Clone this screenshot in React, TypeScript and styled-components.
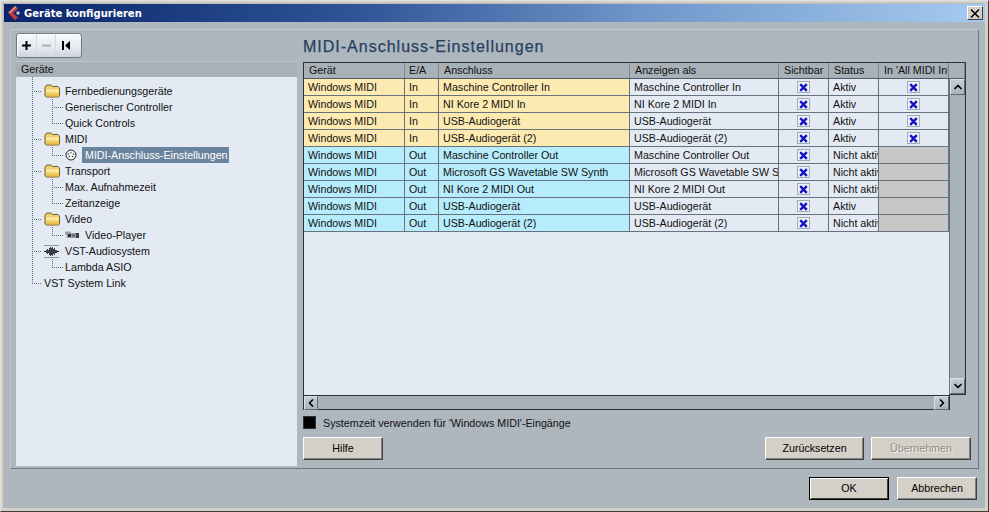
import styled, { createGlobalStyle } from "styled-components";
import { ChevronDown, ChevronLeft, ChevronRight, ChevronUp } from "lucide-react";

const GlobalStyle = createGlobalStyle`
  html, body {
    margin: 0;
    padding: 0;
    background: #aeb6be;
  }
  body {
    font-family: "Liberation Sans", Arial, sans-serif;
    font-size: 10.7px;
    color: #111;
  }
`;

const Win = styled.div`
  box-sizing: border-box;
  width: 989px;
  height: 512px;
  padding: 3px;
  display: flex;
  flex-direction: column;
  background: #aeb6be;
  border-style: solid;
  border-width: 1px;
  border-color: #e4e2dc #3c3c3c #3c3c3c #e4e2dc;
  box-shadow: inset 1px 1px 0 #d4d0c8, inset -1px -1px 0 #d4d0c8, inset 2px 2px 0 #d4d0c8, inset -3px -3px 0 #d4d0c8;
`;

const TitleBar = styled.div`
  flex: none;
  height: 18px;
  display: flex;
  align-items: center;
  padding: 0 2px 0 3px;
  background: linear-gradient(90deg, #0a246a 0%, #2e5396 35%, #6f97c9 65%, #a6caf0 100%);
`;

const TitleText = styled.span`
  margin-left: 3px;
  flex: 1;
  font-family: "DejaVu Sans", sans-serif;
  font-weight: 700;
  font-size: 10px;
  color: #fff;
`;

const CloseButton = styled.button`
  box-sizing: border-box;
  width: 16px;
  height: 14px;
  padding: 0;
  display: flex;
  align-items: center;
  justify-content: center;
  background: #d4d0c8;
  border: 1px solid;
  border-color: #fff #404040 #404040 #fff;
`;

const Panel = styled.div`
  flex: none;
  box-sizing: border-box;
  height: 440px;
  margin: 7px 6px 0 6px;
  padding: 3px 7px 2px 5px;
  display: flex;
  gap: 6px;
  border: 1px solid;
  border-color: #c3cad1 #6d7982 #6d7982 #c3cad1;
`;

const Sidebar = styled.div`
  flex: none;
  width: 281px;
  display: flex;
  flex-direction: column;
`;

const ToolBox = styled.div`
  box-sizing: border-box;
  width: 66px;
  height: 25px;
  display: flex;
  border: 1px solid #6f7a84;
  border-radius: 3px;
  background: linear-gradient(180deg, #f6f8fa 0%, #e6ebf0 55%, #cdd5dc 100%);
  box-shadow: inset 1px 1px 0 #fff;
`;

const ToolButton = styled.div<{ $last?: boolean }>`
  box-sizing: border-box;
  flex: 1;
  display: flex;
  align-items: center;
  justify-content: center;
  padding-right: ${({ $last }) => ($last ? "6px" : "0")};
  border-right: ${({ $last }) => ($last ? "none" : "1px solid #d2d9df")};
`;

const PaneHeader = styled.div`
  flex: none;
  margin-top: 3px;
  height: 16px;
  line-height: 15px;
  padding-left: 5px;
  background: #a8b0b8;
  border-top: 1px solid #bcc3ca;
  box-sizing: border-box;
`;

const TreeBody = styled.div`
  flex: 1;
  background: #e3eaf3;
  padding-left: 16px;
`;

const TreeLead = styled.div`
  height: 6px;
  display: flex;
`;

const TreeRow = styled.div`
  height: 16px;
  display: flex;
  align-items: center;
  white-space: nowrap;
`;

const dot = "#5f6b75";
const dotV = `repeating-linear-gradient(180deg, ${dot} 0 1px, transparent 1px 2px)`;
const dotH = `repeating-linear-gradient(90deg, ${dot} 0 1px, transparent 1px 2px)`;

const guideLayers = {
  pipe: { image: dotV, size: "1px 100%", position: "0 0" },
  branch: { image: `${dotV}, ${dotH}`, size: "1px 100%, 100% 1px", position: "0 0, 0 8px" },
  end: { image: `${dotV}, ${dotH}`, size: "1px 9px, 100% 1px", position: "0 0, 0 8px" },
};

const Guide = styled.span<{ $kind: keyof typeof guideLayers; $w: number }>`
  flex: none;
  align-self: stretch;
  box-sizing: border-box;
  width: ${({ $w }) => $w}px;
  padding-right: 2px;
  background-repeat: no-repeat;
  background-origin: content-box;
  background-image: ${({ $kind }) => guideLayers[$kind].image};
  background-size: ${({ $kind }) => guideLayers[$kind].size};
  background-position: ${({ $kind }) => guideLayers[$kind].position};
`;

const IconSlot = styled.span<{ $w: number }>`
  flex: none;
  width: ${({ $w }) => $w}px;
  display: flex;
  align-items: center;
`;

const NodeLabel = styled.span<{ $selected?: boolean }>`
  display: block;
  height: 16px;
  line-height: 16px;
  padding: ${({ $selected }) => ($selected ? "0 1px 0 3px" : "0")};
  background: ${({ $selected }) => ($selected ? "#6b849e" : "transparent")};
  color: ${({ $selected }) => ($selected ? "#fff" : "#111")};
`;

const Main = styled.div`
  flex: 1;
  display: flex;
  flex-direction: column;
  min-width: 0;
`;

const Heading = styled.h1`
  flex: none;
  box-sizing: border-box;
  height: 29px;
  margin: 0;
  padding-top: 4px;
  font-size: 16px;
  line-height: 19px;
  font-weight: 400;
  letter-spacing: 1px;
  color: #26415e;
  -webkit-text-stroke: 0.25px #26415e;
`;

const TableFrame = styled.div`
  flex: none;
  box-sizing: border-box;
  width: 663px;
  height: 348px;
  border-top: 1px solid #26323c;
  border-left: 1px solid #26323c;
  display: flex;
  flex-direction: column;
`;

const columns = "101px 34px 191px 149px 50px 50px 70px";

const HeaderRow = styled.div`
  flex: none;
  box-sizing: border-box;
  height: 16px;
  display: grid;
  grid-template-columns: ${columns} 1fr;
  background: #a8b0b8;
  border-right: 1px solid #26323c;
  border-bottom: 1px solid #4e5b66;
`;

const HeaderCell = styled.div<{ $pad: number }>`
  box-sizing: border-box;
  padding-left: ${({ $pad }) => $pad}px;
  line-height: 15px;
  white-space: nowrap;
  overflow: hidden;
  border-right: 1px solid #7d8891;
`;

const TableMiddle = styled.div`
  flex: 1;
  display: flex;
  min-height: 0;
`;

const RowsArea = styled.div`
  box-sizing: border-box;
  width: 645px;
  background: #e3eaf3;
`;

const DataRow = styled.div`
  height: 17px;
  display: grid;
  grid-template-columns: ${columns};
`;

const rowTints = { in: "#fdeab0", out: "#b6ecfb", plain: "transparent", off: "#c7c7c7" };

const Cell = styled.div<{ $tint: keyof typeof rowTints; $center?: boolean }>`
  box-sizing: border-box;
  padding-left: ${({ $center }) => ($center ? 0 : "4px")};
  line-height: 16px;
  white-space: nowrap;
  overflow: hidden;
  background: ${({ $tint }) => rowTints[$tint]};
  border-right: 1px solid #66737e;
  border-bottom: 1px solid #66737e;
  display: ${({ $center }) => ($center ? "flex" : "block")};
  justify-content: center;
  align-items: center;
`;

const CheckBox = styled.span`
  box-sizing: border-box;
  width: 13px;
  height: 12px;
  display: flex;
  align-items: center;
  justify-content: center;
  background: #eef2f7;
  border: 1px solid #a3acb5;
`;

const VScroll = styled.div`
  flex: none;
  box-sizing: border-box;
  width: 17px;
  display: flex;
  flex-direction: column;
  justify-content: space-between;
  background: #a8b0b8;
  border-right: 1px solid #26323c;
  border-bottom: 1px solid #26323c;
  border-left: 1px solid #66737e;
`;

const HScroll = styled.div`
  flex: none;
  box-sizing: border-box;
  width: 646px;
  height: 15px;
  display: flex;
  justify-content: space-between;
  background: #a8b0b8;
  border-right: 1px solid #26323c;
  border-bottom: 1px solid #26323c;
  border-top: 1px solid #26323c;
`;

const ScrollButton = styled.div<{ $w: number; $h: number }>`
  flex: none;
  box-sizing: border-box;
  width: ${({ $w }) => $w}px;
  height: ${({ $h }) => $h}px;
  display: flex;
  align-items: center;
  justify-content: center;
  background: linear-gradient(180deg, #c5ccd3, #aab3bb);
  border: 1px solid;
  border-color: #dbe1e6 #5e6a74 #5e6a74 #dbe1e6;
`;

const OptionRow = styled.div`
  flex: none;
  height: 13px;
  margin-top: 6px;
  display: flex;
  align-items: center;
  gap: 7px;
`;

const BlackBox = styled.span`
  box-sizing: border-box;
  width: 13px;
  height: 13px;
  background: #000;
  border: 1px solid #26323c;
`;

const ActionRow = styled.div`
  flex: none;
  margin-top: 8px;
  display: flex;
  gap: 7px;
`;

const Spacer = styled.div`
  flex: 1;
`;

const Button = styled.button<{ $w: number; $isDefault?: boolean }>`
  box-sizing: border-box;
  width: ${({ $w }) => $w}px;
  height: 23px;
  padding: 0 0 2px;
  font-family: "Liberation Sans", Arial, sans-serif;
  font-size: 10.7px;
  color: #000;
  background: #d4d0c8;
  border: 1px solid;
  border-color: ${({ $isDefault }) =>
    $isDefault ? "#000" : "#fff #404040 #404040 #fff"};
  box-shadow: ${({ $isDefault }) =>
    $isDefault
      ? "inset 1px 1px 0 #fff, inset -1px -1px 0 #404040"
      : "inset -1px -1px 0 #808080"};
  &:disabled {
    color: #8f8c85;
    text-shadow: 1px 1px 0 #f2f0ea;
  }
`;

const Footer = styled.div`
  flex: none;
  margin-top: 8px;
  padding-right: 8px;
  display: flex;
  justify-content: flex-end;
  gap: 8px;
`;

const Folder = () => (
  <svg width="17" height="14" viewBox="0 0 17 14">
    <defs>
      <linearGradient id="fold" x1="0" y1="0" x2="0" y2="1">
        <stop offset="0" stopColor="#fff2b0" />
        <stop offset="1" stopColor="#e8b834" />
      </linearGradient>
    </defs>
    <path d="M1 3.5 L2.5 1 H7 L8.5 2.5 H14 L15.5 4 V12 L14.5 13 H2.5 L1 12 Z" fill="#f0d070" stroke="#6f5f30" />
    <path d="M2 5.5 H15 V12 L14 12.5 H3 L2 12 Z" fill="url(#fold)" />
  </svg>
);

const MidiIcon = () => (
  <svg width="12" height="12" viewBox="0 0 12 12">
    <circle cx="6" cy="6" r="5" fill="#f5f5f5" stroke="#222" />
    <circle cx="3.4" cy="5" r="0.7" fill="#222" />
    <circle cx="8.6" cy="5" r="0.7" fill="#222" />
    <circle cx="6" cy="3.6" r="0.7" fill="#222" />
    <circle cx="4.4" cy="7.4" r="0.7" fill="#222" />
    <circle cx="7.6" cy="7.4" r="0.7" fill="#222" />
  </svg>
);

const VideoIcon = () => (
  <svg width="15" height="8" viewBox="0 0 15 8">
    <path d="M0 0.5 H5 L6 2 H11 V7 H2 L1 3.5 H0 Z" fill="#9a9fa5" />
    <rect x="3" y="3" width="3" height="3" fill="#2c2f33" />
    <rect x="7" y="3" width="3" height="3" fill="#6c7075" />
    <rect x="11" y="2" width="3" height="5" fill="#3a3d41" />
  </svg>
);

const AudioIcon = () => (
  <svg width="15" height="15" viewBox="0 0 15 15">
    <path d="M0 1.5 H15 M0 13.5 H15" stroke="#8d949b" />
    <path d="M0 7.5 H15" stroke="#222" />
    <path d="M2.5 6 V9 M3.5 5 V10 M4.5 6 V9 M5.5 4 V11 M6.5 3 V12 M7.5 4 V11 M8.5 3 V12 M9.5 5 V10 M10.5 4 V11 M11.5 6 V9 M12.5 6 V9" stroke="#3a3f44" />
  </svg>
);

const CubaseLogo = () => (
  <svg width="14" height="16" viewBox="0 0 14 16">
    <path d="M8 1 L1 8 L8 15 L11 12.5 L6 8 L11 3.5 Z" fill="#c23a3c" />
    <path d="M8 1 L1 8 L3.5 8 L9.5 2.3 Z" fill="#e58a7c" />
    <circle cx="11" cy="8" r="1.7" fill="#c8ccd8" />
  </svg>
);

const CheckMark = () => (
  <svg width="9" height="9" viewBox="0 0 9 9">
    <path d="M1.2 1.2 L7.8 7.8 M7.8 1.2 L1.2 7.8" stroke="#1212c8" strokeWidth="2.4" />
  </svg>
);

const CloseMark = () => (
  <svg width="10" height="9" viewBox="0 0 10 9">
    <path d="M1 0.5 L9 8.5 M9 0.5 L1 8.5" stroke="#000" strokeWidth="1.5" />
  </svg>
);

const PlusIcon = () => (
  <svg width="9" height="9" viewBox="0 0 9 9">
    <path d="M0 4.5 H9 M4.5 0 V9" stroke="#000" strokeWidth="2" />
  </svg>
);

const MinusIcon = () => (
  <svg width="9" height="9" viewBox="0 0 9 9">
    <path d="M0 4.5 H9" stroke="#a9b2ba" strokeWidth="2" />
  </svg>
);

const RewindIcon = () => (
  <svg width="8" height="9" viewBox="0 0 8 9">
    <rect x="0" y="0" width="2" height="9" fill="#000" />
    <path d="M8 0 V9 L3 4.5 Z" fill="#000" />
  </svg>
);

type TreeNode = {
  label: string;
  icon?: "folder" | "midi" | "video" | "audio";
  children?: TreeNode[];
  selected?: boolean;
};

const tree: TreeNode[] = [
  {
    label: "Fernbedienungsgeräte",
    icon: "folder",
    children: [{ label: "Generischer Controller" }, { label: "Quick Controls" }],
  },
  {
    label: "MIDI",
    icon: "folder",
    children: [{ label: "MIDI-Anschluss-Einstellungen", icon: "midi", selected: true }],
  },
  {
    label: "Transport",
    icon: "folder",
    children: [{ label: "Max. Aufnahmezeit" }, { label: "Zeitanzeige" }],
  },
  {
    label: "Video",
    icon: "folder",
    children: [{ label: "Video-Player", icon: "video" }],
  },
  {
    label: "VST-Audiosystem",
    icon: "audio",
    children: [{ label: "Lambda ASIO" }],
  },
  { label: "VST System Link" },
];

const ports = [
  { dir: "In", port: "Maschine Controller In", status: "Aktiv" },
  { dir: "In", port: "NI Kore 2 MIDI In", status: "Aktiv" },
  { dir: "In", port: "USB-Audiogerät", status: "Aktiv" },
  { dir: "In", port: "USB-Audiogerät (2)", status: "Aktiv" },
  { dir: "Out", port: "Maschine Controller Out", status: "Nicht aktiv" },
  { dir: "Out", port: "Microsoft GS Wavetable SW Synth", status: "Nicht aktiv" },
  { dir: "Out", port: "NI Kore 2 MIDI Out", status: "Nicht aktiv" },
  { dir: "Out", port: "USB-Audiogerät", status: "Aktiv" },
  { dir: "Out", port: "USB-Audiogerät (2)", status: "Nicht aktiv" },
];

const headers = [
  { label: "Gerät", pad: 5 },
  { label: "E/A", pad: 4 },
  { label: "Anschluss", pad: 5 },
  { label: "Anzeigen als", pad: 5 },
  { label: "Sichtbar", pad: 5 },
  { label: "Status", pad: 5 },
  { label: "In 'All MIDI In'", pad: 5 },
  { label: "", pad: 0 },
];

const App = () => {
  return (
    <>
      <GlobalStyle />
      <Win>
        <TitleBar>
          <CubaseLogo />
          <TitleText>Geräte konfigurieren</TitleText>
          <CloseButton>
            <CloseMark />
          </CloseButton>
        </TitleBar>

        <Panel>
          <Sidebar>
            <ToolBox>
              <ToolButton>
                <PlusIcon />
              </ToolButton>
              <ToolButton>
                <MinusIcon />
              </ToolButton>
              <ToolButton $last>
                <RewindIcon />
              </ToolButton>
            </ToolBox>
            <PaneHeader>Geräte</PaneHeader>
            <TreeBody>
              <TreeLead>
                <Guide $kind="pipe" $w={12} />
              </TreeLead>
              {tree.map((node, i) => {
                const last = i === tree.length - 1;
                return (
                  <div key={node.label}>
                    <TreeRow>
                      <Guide $kind={last ? "end" : "branch"} $w={12} />
                      {node.icon === "folder" && (
                        <IconSlot $w={21}>
                          <Folder />
                        </IconSlot>
                      )}
                      {node.icon === "audio" && (
                        <IconSlot $w={21}>
                          <AudioIcon />
                        </IconSlot>
                      )}
                      <NodeLabel>{node.label}</NodeLabel>
                    </TreeRow>
                    {node.children?.map((child, j) => (
                      <TreeRow key={child.label}>
                        <Guide $kind="pipe" $w={20} />
                        <Guide
                          $kind={j === node.children!.length - 1 ? "end" : "branch"}
                          $w={13}
                        />
                        {child.icon === "midi" && (
                          <IconSlot $w={17}>
                            <MidiIcon />
                          </IconSlot>
                        )}
                        {child.icon === "video" && (
                          <IconSlot $w={20}>
                            <VideoIcon />
                          </IconSlot>
                        )}
                        <NodeLabel $selected={child.selected}>{child.label}</NodeLabel>
                      </TreeRow>
                    ))}
                  </div>
                );
              })}
            </TreeBody>
          </Sidebar>

          <Main>
            <Heading>MIDI-Anschluss-Einstellungen</Heading>
            <TableFrame>
              <HeaderRow>
                {headers.map((h, i) => (
                  <HeaderCell key={i} $pad={h.pad}>
                    {h.label}
                  </HeaderCell>
                ))}
              </HeaderRow>
              <TableMiddle>
                <RowsArea>
                  {ports.map((p) => {
                    const tint = p.dir === "In" ? "in" : "out";
                    return (
                      <DataRow key={p.dir + p.port}>
                        <Cell $tint={tint}>Windows MIDI</Cell>
                        <Cell $tint={tint}>{p.dir}</Cell>
                        <Cell $tint={tint}>{p.port}</Cell>
                        <Cell $tint="plain">{p.port}</Cell>
                        <Cell $tint="plain" $center>
                          <CheckBox>
                            <CheckMark />
                          </CheckBox>
                        </Cell>
                        <Cell $tint="plain">{p.status}</Cell>
                        {p.dir === "In" ? (
                          <Cell $tint="plain" $center>
                            <CheckBox>
                              <CheckMark />
                            </CheckBox>
                          </Cell>
                        ) : (
                          <Cell $tint="off" />
                        )}
                      </DataRow>
                    );
                  })}
                </RowsArea>
                <VScroll>
                  <ScrollButton $w={15} $h={16}>
                    <ChevronUp size={12} strokeWidth={3.5} color="#000" />
                  </ScrollButton>
                  <ScrollButton $w={15} $h={16}>
                    <ChevronDown size={12} strokeWidth={3.5} color="#000" />
                  </ScrollButton>
                </VScroll>
              </TableMiddle>
              <HScroll>
                <ScrollButton $w={14} $h={14}>
                  <ChevronLeft size={12} strokeWidth={3.5} color="#000" />
                </ScrollButton>
                <ScrollButton $w={15} $h={14}>
                  <ChevronRight size={12} strokeWidth={3.5} color="#000" />
                </ScrollButton>
              </HScroll>
            </TableFrame>
            <OptionRow>
              <BlackBox />
              <span>Systemzeit verwenden für 'Windows MIDI'-Eingänge</span>
            </OptionRow>
            <ActionRow>
              <Button $w={80}>Hilfe</Button>
              <Spacer />
              <Button $w={99}>Zurücksetzen</Button>
              <Button $w={100} disabled>
                Übernehmen
              </Button>
            </ActionRow>
          </Main>
        </Panel>

        <Footer>
          <Button $w={80} $isDefault>
            OK
          </Button>
          <Button $w={80}>Abbrechen</Button>
        </Footer>
      </Win>
    </>
  );
};

export default App;
